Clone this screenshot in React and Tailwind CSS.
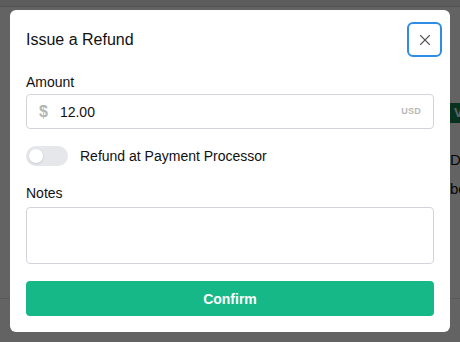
import { X } from "lucide-react";

function BackgroundPage() {
  return (
    <div className="h-[342px] w-[460px] overflow-hidden bg-white">
      <div className="h-[7px] border-b border-[#d4d4d4] bg-[#ececec]" />
      <div className="flex flex-col pl-[450px] pt-[96px] text-[15px] text-[#111]">
        <span className="w-fit bg-[#177f4f] px-1 text-[13px] font-bold text-white">VALID</span>
        <span className="mt-[27px] leading-5">Date</span>
        <span className="mt-[9px] leading-5">be</span>
      </div>
      <div className="mt-[99px] border-t border-[#e5e5e5]" />
    </div>
  );
}

export default function App() {
  return (
    <div className="relative h-[342px] w-[460px] overflow-hidden font-['Liberation_Sans',Arial,sans-serif]">
      <BackgroundPage />

      {/* Dimmed backdrop with the refund dialog on top */}
      <div className="absolute inset-0 bg-black/[0.61] p-[10px]">
        <div className="flex flex-col rounded-md bg-white px-4 pt-3 pb-4">
          <div className="flex items-center justify-between">
            <h2 className="text-base text-[#111]">Issue a Refund</h2>
            <button className="-mr-2 flex size-[35px] items-center justify-center rounded-md border-2 border-[#2f8ce6] text-[#555]">
              <X size={18} strokeWidth={1.5} />
            </button>
          </div>

          <label className="mt-[15px] text-sm leading-5 text-[#111]">Amount</label>
          <div className="mt-[2px] flex h-[35px] items-center rounded border border-[#d1d5db] px-3">
            <span className="text-base font-bold text-[#b5b5b5]">$</span>
            <span className="ml-[12px] text-sm text-[#111]">12.00</span>
            <span className="ml-auto text-[9px] font-bold tracking-wide text-[#b8b8b8]">USD</span>
          </div>

          <div className="mt-[17px] flex items-center gap-3">
            <div className="flex h-5 w-[42px] items-center rounded-full bg-[#e5e7eb] px-[3px]">
              <span className="size-[14px] rounded-full bg-white shadow-sm" />
            </div>
            <span className="text-sm text-[#111]">Refund at Payment Processor</span>
          </div>

          <label className="mt-[17px] text-sm leading-5 text-[#111]">Notes</label>
          <textarea className="mt-[4px] h-[57px] resize-none rounded border border-[#d1d5db]" />

          <button className="mt-[17px] h-[35px] rounded bg-[#15b886] text-sm font-bold text-white">
            Confirm
          </button>
        </div>
      </div>
    </div>
  );
}
